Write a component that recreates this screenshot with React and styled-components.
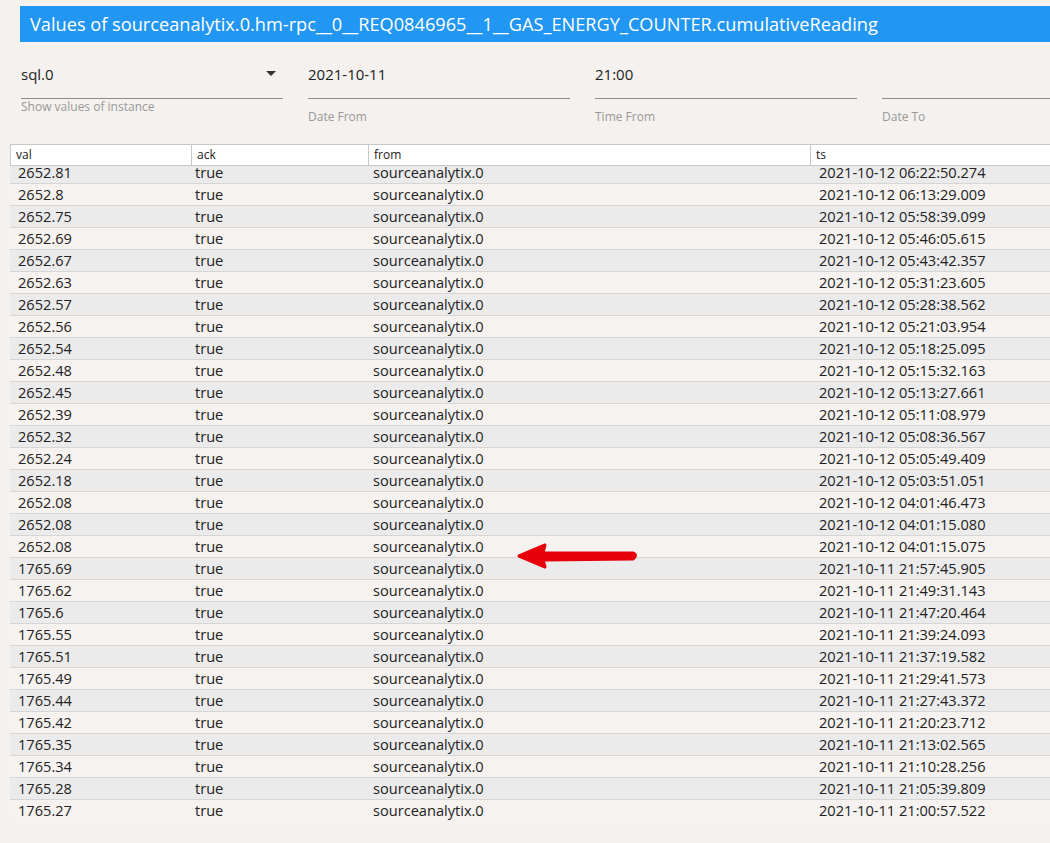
import React, { useRef, useLayoutEffect } from 'react';
import styled, { createGlobalStyle } from 'styled-components';

const GlobalStyle = createGlobalStyle`
  html, body {
    margin: 0;
    padding: 0;
    background: #f4f1ee;
    overflow: hidden;
  }
  body {
    font-family: 'Open Sans', 'Noto Sans', 'Liberation Sans', sans-serif;
    color: #222;
  }
`;

const rows = [
  ['2652.81', '2021-10-12 06:22:50.274'],
  ['2652.8', '2021-10-12 06:13:29.009'],
  ['2652.75', '2021-10-12 05:58:39.099'],
  ['2652.69', '2021-10-12 05:46:05.615'],
  ['2652.67', '2021-10-12 05:43:42.357'],
  ['2652.63', '2021-10-12 05:31:23.605'],
  ['2652.57', '2021-10-12 05:28:38.562'],
  ['2652.56', '2021-10-12 05:21:03.954'],
  ['2652.54', '2021-10-12 05:18:25.095'],
  ['2652.48', '2021-10-12 05:15:32.163'],
  ['2652.45', '2021-10-12 05:13:27.661'],
  ['2652.39', '2021-10-12 05:11:08.979'],
  ['2652.32', '2021-10-12 05:08:36.567'],
  ['2652.24', '2021-10-12 05:05:49.409'],
  ['2652.18', '2021-10-12 05:03:51.051'],
  ['2652.08', '2021-10-12 04:01:46.473'],
  ['2652.08', '2021-10-12 04:01:15.080'],
  ['2652.08', '2021-10-12 04:01:15.075'],
  ['1765.69', '2021-10-11 21:57:45.905'],
  ['1765.62', '2021-10-11 21:49:31.143'],
  ['1765.6', '2021-10-11 21:47:20.464'],
  ['1765.55', '2021-10-11 21:39:24.093'],
  ['1765.51', '2021-10-11 21:37:19.582'],
  ['1765.49', '2021-10-11 21:29:41.573'],
  ['1765.44', '2021-10-11 21:27:43.372'],
  ['1765.42', '2021-10-11 21:20:23.712'],
  ['1765.35', '2021-10-11 21:13:02.565'],
  ['1765.34', '2021-10-11 21:10:28.256'],
  ['1765.28', '2021-10-11 21:05:39.809'],
  ['1765.27', '2021-10-11 21:00:57.522'],
];

const columns = 'grid-template-columns: 180px 177px 442px 300px;';

const Page = styled.div`
  width: 1050px;
  height: 843px;
  overflow: hidden;
  position: relative;
`;

const TitleBar = styled.div`
  margin: 6px 0 0 20px;
  height: 36px;
  width: 1060px;
  background: #2196f3;
  color: #fff;
  font-size: 18.2px;
  line-height: 36px;
  padding-left: 10px;
  white-space: nowrap;
  box-sizing: border-box;
`;

const Fields = styled.div`
  display: flex;
  gap: 25px;
  padding: 15px 0 0 21px;
  width: 1200px;
`;

const Field = styled.div`
  width: 262px;
  flex: none;
`;

const Input = styled.div`
  height: 42px;
  display: flex;
  align-items: center;
  justify-content: space-between;
  border-bottom: 1px solid #8c8c8c;
  font-size: 15px;
  color: #222;
  box-sizing: border-box;
  padding-bottom: 8px;
`;

const Caret = styled.span`
  width: 0;
  height: 0;
  border-left: 5px solid transparent;
  border-right: 5px solid transparent;
  border-top: 5px solid #333;
  margin-right: 7px;
`;

const Hint = styled.div`
  font-size: 12px;
  color: #999;
  margin-top: ${p => (p.helper ? '0' : '10px')};
  line-height: 16px;
`;

const Table = styled.div`
  margin: 19px 0 0 10px;
  width: 1100px;
`;

const HeadRow = styled.div`
  display: grid;
  ${columns}
  height: 22px;
  background: #fff;
  border: 1px solid #c8c8c8;
  box-sizing: border-box;
`;

const HeadCell = styled.div`
  font-size: 12px;
  line-height: 20px;
  padding-left: 5px;
  color: #222;
  & + & {
    border-left: 1px solid #c8c8c8;
  }
`;

const Body = styled.div`
  height: 654px;
  overflow: hidden;
`;

const Row = styled.div`
  display: grid;
  ${columns}
  height: 22px;
  box-sizing: border-box;
  border-bottom: 1px solid #d6d6d6;
  background: ${p => (p.odd ? '#ebebeb' : '#f5f2ef')};
`;

const Cell = styled.div`
  font-size: 14.6px;
  line-height: 21px;
  padding-left: ${p => p.pad || 8}px;
  color: #222;
  white-space: nowrap;
`;

const Arrow = styled.svg`
  position: absolute;
  left: 515px;
  top: 540px;
`;

function Select({ value, helper }) {
  return (
    <Field>
      <Input>
        <span>{value}</span>
        <Caret />
      </Input>
      <Hint helper>{helper}</Hint>
    </Field>
  );
}

function TextField({ value, label }) {
  return (
    <Field>
      <Input>{value}</Input>
      <Hint>{label}</Hint>
    </Field>
  );
}

export default function App() {
  const bodyRef = useRef(null);

  // the list is scrolled a few pixels down, as in the capture
  useLayoutEffect(() => {
    if (bodyRef.current) bodyRef.current.scrollTop = 4;
  }, []);

  return (
    <Page>
      <GlobalStyle />
      <TitleBar>Values of sourceanalytix.0.hm-rpc__0__REQ0846965__1__GAS_ENERGY_COUNTER.cumulativeReading</TitleBar>
      <Fields>
        <Select value="sql.0" helper="Show values of instance" />
        <TextField value="2021-10-11" label="Date From" />
        <TextField value="21:00" label="Time From" />
        <TextField value="" label="Date To" />
      </Fields>
      <Table>
        <HeadRow>
          <HeadCell>val</HeadCell>
          <HeadCell>ack</HeadCell>
          <HeadCell>from</HeadCell>
          <HeadCell>ts</HeadCell>
        </HeadRow>
        <Body ref={bodyRef}>
          {rows.map(([val, ts], i) => (
            <Row key={i} odd={i % 2 === 0}>
              <Cell>{val}</Cell>
              <Cell pad={5}>true</Cell>
              <Cell pad={6}>sourceanalytix.0</Cell>
              <Cell pad={10}>{ts}</Cell>
            </Row>
          ))}
        </Body>
      </Table>
      <Arrow width="130" height="32" viewBox="0 0 130 32">
        <path d="M4 16 L30 5 L28 13 L118 13 Q123 15 118 19 L28 20 L30 27 Z" fill="#e8000b" stroke="#e8000b" strokeWidth="3" strokeLinejoin="round" />
      </Arrow>
    </Page>
  );
}
